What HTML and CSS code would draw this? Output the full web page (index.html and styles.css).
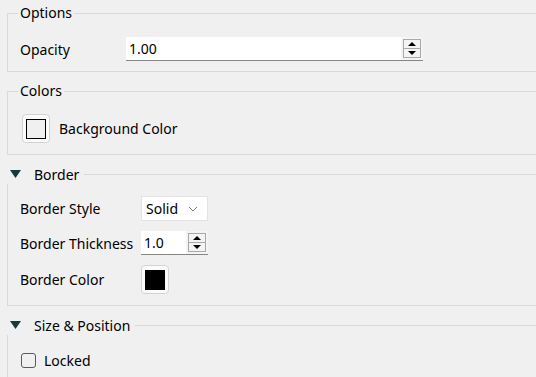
FILE: index.html
```html
<!DOCTYPE html>
<html lang="en">

<head>
    <meta charset="UTF-8">
    <title>Properties</title>
    <link rel="stylesheet" href="styles.css">
</head>

<body>
    <div class="panel">
        <fieldset class="group options">
            <legend>Options</legend>
            <div class="row">
                <span class="label opacity-label">Opacity</span>
                <div class="spin wide">
                    <span class="value">1.00</span>
                    <span class="arrows">
                        <span class="arrow-btn"><span class="arrow up"></span></span>
                        <span class="arrow-btn"><span class="arrow down"></span></span>
                    </span>
                </div>
            </div>
        </fieldset>

        <fieldset class="group colors">
            <legend>Colors</legend>
            <div class="row">
                <span class="swatch-btn"><span class="swatch light"></span></span>
                <span class="swatch-text">Background Color</span>
            </div>
        </fieldset>

        <div class="expander">
            <div class="expander-head">
                <svg class="caret" width="11" height="8" viewBox="0 0 11 8"><polygon points="0,0 11,0 5.5,8" fill="#163a3a"/></svg>
                <span class="expander-title">Border</span>
                <span class="head-line"></span>
            </div>
            <div class="expander-body border-body">
                <div class="row border-row">
                    <span class="label">Border Style</span>
                    <div class="combo">
                        <span class="value">Solid</span>
                        <svg width="10" height="6" viewBox="0 0 10 6"><polyline points="1,1 5,5 9,1" fill="none" stroke="#777" stroke-width="1"/></svg>
                    </div>
                </div>
                <div class="row border-row">
                    <span class="label">Border Thickness</span>
                    <div class="spin small">
                        <span class="value">1.0</span>
                        <span class="arrows">
                            <span class="arrow-btn"><span class="arrow up"></span></span>
                            <span class="arrow-btn"><span class="arrow down"></span></span>
                        </span>
                    </div>
                </div>
                <div class="row border-row">
                    <span class="label">Border Color</span>
                    <span class="swatch-btn"><span class="swatch dark"></span></span>
                </div>
            </div>
        </div>

        <div class="expander">
            <div class="expander-head">
                <svg class="caret" width="11" height="8" viewBox="0 0 11 8"><polygon points="0,0 11,0 5.5,8" fill="#163a3a"/></svg>
                <span class="expander-title">Size &amp; Position</span>
                <span class="head-line"></span>
            </div>
            <div class="expander-body size-body">
                <label class="check-row">
                    <span class="checkbox"></span>
                    <span>Locked</span>
                </label>
            </div>
        </div>
    </div>
</body>

</html>
```

FILE: styles.css
```css
body {
    margin: 0;
    background-color: #f0f0f0;
    font-family: "Noto Sans", "Open Sans", sans-serif;
    font-size: 14px;
    color: #000;
    overflow: hidden;
}

.panel {
    display: flex;
    flex-direction: column;
    height: 377px;
    overflow: hidden;
}

/* group boxes, open on the right side */
.group {
    margin: 0 0 0 7px;
    padding: 0 0 0 10px;
    border: 1px solid #d9d9d9;
    border-right: none;
    min-width: 0;
}

.group legend {
    padding: 0 2px;
    line-height: 20px;
}

.options {
    margin-top: 3px;
    padding-bottom: 10px;
}

.colors {
    margin-top: 9px;
    padding-bottom: 11px;
}

.row {
    display: flex;
    align-items: center;
}

.options .row {
    margin-top: 14px;
    padding-left: 2px;
}

.colors .row {
    margin-top: 13px;
    padding-left: 4px;
}

.opacity-label {
    width: 106px;
}

.spin {
    display: flex;
    align-items: center;
    height: 23px;
    background-color: #fff;
    border-bottom: 1px solid #858585;
}

.spin .value {
    flex: 1;
    padding-left: 3px;
}

.spin.wide {
    width: 297px;
}

.spin.small {
    width: 67px;
}

.arrows {
    display: flex;
    flex-direction: column;
    align-self: stretch;
    justify-content: center;
    padding: 0 2px;
    background-color: #f4f4f4;
}

.arrow-btn {
    width: 16px;
    height: 8px;
    border: 1px solid #a9a9a9;
    display: flex;
    justify-content: center;
    align-items: center;
    background-color: #f4f4f4;
}

.arrow-btn + .arrow-btn {
    border-top: none;
}

.arrow {
    width: 0;
    height: 0;
    border-left: 4px solid transparent;
    border-right: 4px solid transparent;
}

.arrow.up {
    border-bottom: 4px solid #000;
}

.arrow.down {
    border-top: 4px solid #000;
}

.swatch-btn {
    width: 26px;
    height: 27px;
    border: 1px solid #d3d3d3;
    border-radius: 4px;
    background-color: #fbfbfb;
    display: flex;
    justify-content: center;
    align-items: center;
}

.swatch {
    width: 18px;
    height: 18px;
    border: 1px solid #000;
}

.swatch.light {
    background-color: #f0f0f0;
}

.swatch.dark {
    background-color: #000;
}

.swatch-text {
    margin-left: 9px;
}

/* collapsible sections */
.expander {
    margin-top: 9px;
    flex-shrink: 0;
}

.expander-head {
    display: flex;
    align-items: center;
    height: 20px;
    padding-left: 10px;
}

.caret {
    margin-right: 13px;
}

.head-line {
    flex: 1;
    height: 1px;
    margin-left: 5px;
    background-color: #d9d9d9;
}

.expander-body {
    margin-left: 7px;
    border-left: 1px solid #d9d9d9;
    padding-left: 12px;
}

.border-body {
    border-bottom: 1px solid #d9d9d9;
    padding-top: 12px;
    padding-bottom: 11px;
}

.border-row + .border-row {
    margin-top: 10px;
}

.border-row .label {
    width: 121px;
}

.combo {
    height: 25px;
    display: flex;
    align-items: center;
    justify-content: space-between;
    padding: 0 9px 0 4px;
    box-sizing: border-box;
    width: 67px;
    background-color: #fff;
    border: 1px solid #e3e3e3;
}

.size-body {
    height: 42px;
    padding-top: 16px;
    box-sizing: border-box;
}

.check-row {
    display: flex;
    align-items: center;
    gap: 8px;
    margin-left: 1px;
}

.checkbox {
    width: 13px;
    height: 13px;
    border: 1px solid #5a5a5a;
    border-radius: 3px;
}
```
